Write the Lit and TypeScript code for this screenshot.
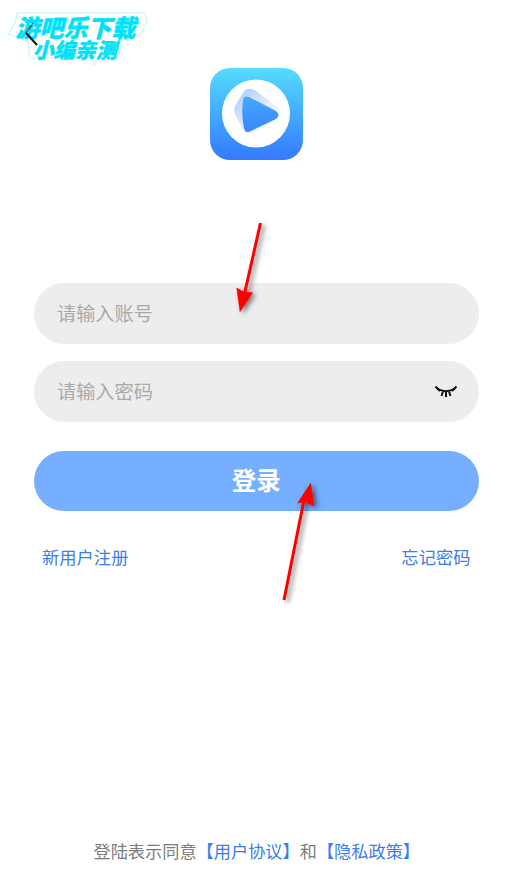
import { LitElement, html, css } from 'lit';
import { customElement } from 'lit/decorators.js';

@customElement('app-root')
export class AppRoot extends LitElement {
  static styles = css`
    :host {
      display: block;
      position: relative;
      width: 100%;
      height: 870px;
      overflow: hidden;
      background: #ffffff;
      font-family: "Noto Sans CJK SC", "Noto Sans", sans-serif;
    }

    .page {
      display: flex;
      flex-direction: column;
      align-items: center;
      height: 100%;
      padding: 68px 32.5px 0 34px;
      box-sizing: border-box;
    }

    .logo {
      display: block;
      width: 93px;
      height: 92px;
      margin-bottom: 123px;
    }

    .field {
      display: flex;
      align-items: center;
      width: 100%;
      height: 61px;
      flex: none;
      border-radius: 31px;
      background: #ededed;
      padding: 0 23px 2px 23px;
      box-sizing: border-box;
      margin-bottom: 17px;
    }

    .field input {
      flex: 1;
      min-width: 0;
      border: 0;
      outline: 0;
      padding: 0;
      background: transparent;
      font: inherit;
      font-size: 19.2px;
      color: #333333;
    }

    .field input::placeholder {
      color: #a9a9a9;
      opacity: 1;
    }

    .eye {
      width: 24px;
      height: 16px;
      flex: none;
      margin-right: -2px;
      margin-bottom: -2px;
    }

    .submit {
      width: 100%;
      height: 60px;
      flex: none;
      margin-top: 12px;
      padding: 0 0 3px;
      border: 0;
      border-radius: 30px;
      background: #76afff;
      color: #ffffff;
      font: inherit;
      font-size: 24.5px;
      font-weight: 700;
    }

    .links {
      display: flex;
      justify-content: space-between;
      width: 100%;
      padding: 0 8px;
      box-sizing: border-box;
      margin-top: 33px;
      font-size: 17.3px;
      line-height: 26px;
      color: #3b7cf0;
    }

    .terms {
      margin-top: auto;
      margin-bottom: 6px;
      margin-left: 1px;
      font-size: 17.2px;
      line-height: 26px;
      color: #7d7d7d;
      white-space: nowrap;
    }

    .terms span {
      color: #3b7cf0;
    }

    .watermark {
      position: absolute;
      left: 8px;
      top: 10px;
      width: 140px;
      height: 58px;
    }

    .outline {
      position: absolute;
      inset: 0;
      width: 100%;
      height: 100%;
    }

    .back {
      position: absolute;
      left: 16px;
      top: 10px;
      width: 16px;
      height: 28px;
    }

    .mark {
      position: absolute;
      font-weight: 900;
      white-space: nowrap;
      color: #00e2f8;
      transform: skewX(-14deg);
      -webkit-text-stroke: 0.4px #00e2f8;
    }

    .mark.one {
      left: 10px;
      top: 2px;
      font-size: 24px;
      line-height: 30px;
    }

    .mark.two {
      left: 27px;
      top: 26px;
      font-size: 21px;
      line-height: 26px;
    }

    .arrows {
      position: absolute;
      inset: 0;
      width: 100%;
      height: 100%;
      pointer-events: none;
    }
  `;

  render() {
    return html`
      <div class="page">
        <svg class="logo" viewBox="0 0 93 92">
          <defs>
            <linearGradient id="tile" x1="0" y1="0" x2="0" y2="1">
              <stop offset="0" stop-color="#54dcff" />
              <stop offset="1" stop-color="#3479ff" />
            </linearGradient>
            <linearGradient id="swoosh" x1="0.2" y1="0.1" x2="0.9" y2="0.8">
              <stop offset="0" stop-color="#b8d2fb" />
              <stop offset="0.55" stop-color="#e3edfd" />
              <stop offset="1" stop-color="#ffffff" />
            </linearGradient>
            <linearGradient id="play" x1="0" y1="0" x2="0" y2="1">
              <stop offset="0" stop-color="#46a8fb" />
              <stop offset="1" stop-color="#3a86fc" />
            </linearGradient>
          </defs>
          <rect width="93" height="92" rx="20" fill="url(#tile)" />
          <circle cx="46" cy="45.500" r="34" fill="#ffffff" />
          <path
            d="M35 22 Q40 19 46 23 L69 40 Q75 46 69 51 L46 64 Q37 68 33 62 L25 46 Q23 41 26 36 Z"
            fill="url(#swoosh)"
          />
          <path
            d="M33 33 Q33 27 39 29 L66 43 Q71 47 66 51 L41 63 Q35 66 34 60 Q31 46 33 33 Z"
            fill="url(#play)"
          />
        </svg>

        <label class="field">
          <input type="text" placeholder="请输入账号" />
        </label>
        <label class="field">
          <input type="password" placeholder="请输入密码" />
          <svg class="eye" viewBox="0 0 24 16" fill="none" stroke="#111111" stroke-width="2">
            <path d="M3 4.500 C8 8 16 8 21 4.500" />
            <path d="M1.500 2.500 L6 7 M22.500 2.500 L18 7" />
            <path d="M9 7.500 L7.500 12 M12 8 V13 M15 7.500 L16.500 12" />
          </svg>
        </label>

        <button class="submit" type="button">登录</button>

        <div class="links">
          <span>新用户注册</span>
          <span>忘记密码</span>
        </div>

        <div class="terms">登陆表示同意<span>【用户协议】</span>和<span>【隐私政策】</span></div>
      </div>

      <div class="watermark">
        <svg class="outline" viewBox="0 0 140 58" fill="#ffffff" stroke="#9af2fc" stroke-width="0.700">
          <path d="M9 3 L137 3 L139 13 L130 27 L115 30 L110 48 L89 49 L86 55 L82 47 L22 48 L20 32 L10 27 L0 24 L7 13 Z" />
        </svg>
        <span class="mark one">游吧乐下载</span>
        <span class="mark two">小编亲测</span>
        <svg class="back" viewBox="0 0 16 28" fill="none" stroke="#111111" stroke-width="2">
          <path d="M9 3 L2 13" opacity="0.450" />
          <path d="M2 13 L13 25" />
        </svg>
      </div>

      <svg class="arrows" viewBox="0 0 511 870">
        <defs>
          <filter id="shade" x="-60%" y="-10%" width="220%" height="120%">
            <feDropShadow dx="3" dy="2" stdDeviation="2.500" flood-color="#000000" flood-opacity="0.500" />
          </filter>
        </defs>
        <g filter="url(#shade)" fill="#fe0000" stroke="#fe0000">
          <path d="M260.500 223 L244 296" stroke-width="3" fill="none" />
          <path d="M236.700 288 L244 292 L252.700 292.700 L240 311.700 Z" stroke-width="0.500" />
          <path d="M284 600 L304 500" stroke-width="3" fill="none" />
          <path d="M297.700 503 L310.700 483 L314 506 L305 501.700 Z" stroke-width="0.500" />
        </g>
      </svg>
    `;
  }
}

declare global {
  interface HTMLElementTagNameMap {
    'app-root': AppRoot;
  }
}
